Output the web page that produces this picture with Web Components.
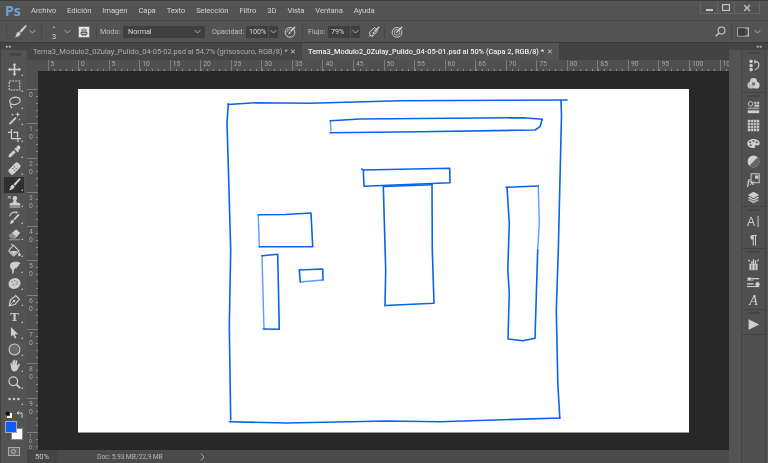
<!DOCTYPE html>
<html lang="es">
<head>
<meta charset="utf-8">
<title>Photoshop</title>
<style>
  html, body { margin: 0; height: 100%; background: #535353; overflow: hidden; }
  body { font-family: Roboto, "Liberation Sans", sans-serif; }
</style>
</head>
<body>
<ps-app></ps-app>

<script>
// icons are all on a 16x16 box, light grey
const ICONS = {
  move: '<path d="M8 0l2.400 2.800H9V7h4.200V5.600L16 8l-2.800 2.400V9H9v4.200h1.400L8 16l-2.400-2.800H7V9H2.800v1.400L0 8l2.800-2.400V7H7V2.800H5.600z"/>',
  marquee: '<rect x="1.500" y="2.500" width="13" height="11" fill="none" stroke="currentColor" stroke-width="1.300" stroke-dasharray="2.400 1.300"/>',
  lasso: '<ellipse cx="8.500" cy="6" rx="6.500" ry="4.500" fill="none" stroke="currentColor" stroke-width="1.500" transform="rotate(-12 8.500 6)"/><path d="M4 10c-1.600 1-1.600 2.600 0 3 .9.300.6 1.600-.6 2" fill="none" stroke="currentColor" stroke-width="1.300"/>',
  wand: '<path d="M1 14l8-8 1.600 1.600-8 8z"/><path d="M12 0l.8 2.200L15 3l-2.200.8L12 6l-.8-2.200L9 3l2.200-.8zM5.500 1.500l.5 1.300 1.300.5-1.300.5-.5 1.300L5 3.800l-1.300-.5 1.300-.5zM14 8l.4 1.100 1.100.4-1.100.4L14 11l-.4-1.100-1.100-.4 1.100-.4z"/>',
  crop: '<path d="M3.500 0H5v11h11v1.500h-3V16h-1.500v-3.500h-8V5H0V3.500h3.500zM6.500 3.500h6v7H11V5H6.500z"/>',
  eyedropper: '<path d="M11 1.200c1-1 2.600-1 3.600.1 1 1 1 2.500 0 3.500l-2 2 .9 1-1.300 1.300-4.300-4.300 1.300-1.300 1 .9zM7 6.500L9.500 9l-5.600 5.600-2.500.9-.9-.9.900-2.500z"/>',
  heal: '<g transform="rotate(-45 8 8)"><rect x="0" y="4" width="16" height="8" rx="2.200"/><g fill="#535353"><circle cx="6.500" cy="6.500" r=".7"/><circle cx="9.500" cy="6.500" r=".7"/><circle cx="6.500" cy="9.500" r=".7"/><circle cx="9.500" cy="9.500" r=".7"/></g></g>',
  brush: '<path d="M15 .5c.6.500.5 1.300-.1 2L8.800 9.500 6.700 7.600 13.300.8c.6-.5 1.200-.7 1.700-.3zM6 8.400l2.100 1.900c-.3 2.700-2.900 4.800-7.100 4.700 1.400-1 1.600-1.900 1.800-3.300.2-1.600 1.500-3 3.200-3.300z"/>',
  stamp: '<path d="M8.500 1a2.800 2.800 0 0 1 1.600 5.100L10.500 9l4.500 1.500V13H2v-2.500L6.500 9l.4-2.900A2.800 2.800 0 0 1 8.500 1zM2 14h13v1.500H2z"/><path d="M0 1l3.500 3.500M3.500 1L0 4.500" stroke="currentColor" stroke-width="1.200" fill="none"/>',
  history: '<path d="M13.500 4c.6.400.5 1.200 0 1.800L8.200 11.500 6.500 10l5.400-5.700c.5-.5 1.100-.7 1.600-.3zM5.800 10.700l1.800 1.600c-.3 2-2.500 3.700-6 3.500 1.200-.8 1.400-1.600 1.500-2.700.2-1.300 1.300-2.200 2.700-2.400z"/><path d="M2 6.500C3 3 6 1 10.500 1.500" fill="none" stroke="currentColor" stroke-width="1.300"/><path d="M9.500 0l3 1.700-3 1.700z"/>',
  eraser: '<path d="M10 1.500l5 4.500-6 6.500H4.500L1 9.500z"/><path d="M1 14h14v1H1z" opacity=".7"/><path d="M5 6l4.600 4.200L8 12.500H4.500L1 9.500z" fill="#8a8a8a"/>',
  bucket: '<path d="M6.500 1.500l7 7-5.500 5.500c-.6.600-1.400.6-2 0L1.500 9.500c-.6-.6-.6-1.400 0-2z" fill="none" stroke="currentColor" stroke-width="1.400"/><path d="M2.500 8.500h9L8 13c-.6.600-1 .600-1.600 0z"/><path d="M14 10c1 1.500 1.700 2.500 1.700 3.500a1.700 1.700 0 0 1-3.400 0c0-1 .7-2 1.700-3.500z"/><path d="M6.500 1.500L3.500 0" stroke="currentColor" stroke-width="1.200"/>',
  smudge: '<path d="M3 3.500C4.500 1.500 7 1 9.500 1c2.500 0 5 .4 5.500 1.500.4 1-.8 1.600-2.500 1.800 1.200.3 1.500 1 1 1.600-.5.7-1.500.8-2.500.8.600.5.500 1.300-.2 1.800-.6.400-1.300.4-2 .2L7.500 11l-.8 4-1.700.4.200-4.500C3.500 10 1.500 6.500 3 3.500z"/>',
  sponge: '<ellipse cx="8" cy="8" rx="7.500" ry="6.500" transform="rotate(-18 8 8)"/><g fill="#6a6a6a"><circle cx="5" cy="6" r=".9"/><circle cx="8.500" cy="4.500" r=".8"/><circle cx="11.500" cy="6" r=".9"/><circle cx="6.500" cy="9.500" r=".9"/><circle cx="10" cy="8.500" r=".9"/><circle cx="4" cy="10" r=".6"/><circle cx="12.500" cy="9" r=".6"/></g>',
  pen: '<path d="M1.500 14.500l1.500-7L9.500 2 14 6.500 8.500 13z" fill="none" stroke="currentColor" stroke-width="1.500"/><circle cx="7.500" cy="8.500" r="1.500"/><path d="M1.500 14.500L6.500 9.500" stroke="currentColor"/>',
  type: '<text x="8" y="13.500" text-anchor="middle" font-family="Liberation Serif" font-weight="700" font-size="16">T</text>',
  path: '<path d="M3 .5l9.500 9.500H8.300l2 4.600-1.900.9-2-4.700L3 13.500z"/><path d="M3 .5v13" stroke="#2b2b2b" stroke-width=".8" fill="none"/>',
  ellipse: '<circle cx="8" cy="8" r="6.700" fill="#6a6a6a" stroke="currentColor" stroke-width="1.300"/>',
  hand: '<path d="M3.800 4.500c.5 0 .9.400 1 1L5.500 8V2.500c0-.5.400-.9.900-.9s.9.400.9.900L7.500 7V1.500c0-.5.400-.9.900-.9s.9.400.9.900V7l.6-4.800c.1-.5.500-.8 1-.7.400.1.700.5.600 1L11 8l.3.400 1.700-2.100c.4-.4 1-.5 1.400-.1.400.3.400.9.100 1.300L11.800 13c-.8 1.500-2 2.300-3.800 2.300-2.300 0-3.500-1.200-4-3.200L2.900 5.600c-.1-.6.300-1.100.9-1.100z"/>',
  zoom: '<circle cx="6.500" cy="6.500" r="5.300" fill="none" stroke="currentColor" stroke-width="1.500"/><path d="M10.500 10.500l4.500 4.500" stroke="currentColor" stroke-width="2.200"/>',
  dots: '<circle cx="3" cy="8" r="1.400"/><circle cx="8" cy="8" r="1.400"/><circle cx="13" cy="8" r="1.400"/>',
  search: '<circle cx="9.500" cy="6.500" r="5" fill="none" stroke="currentColor" stroke-width="1.500"/><path d="M6 10l-5 5" stroke="currentColor" stroke-width="2"/>',
  workspace: '<rect x=".8" y="2.800" width="14.400" height="10.400" fill="none" stroke="currentColor" stroke-width="1.300"/><rect x="1" y="3" width="10" height="10" fill="#3e3e3e"/>',
  preset: '<rect x="1" y="1" width="14" height="14" fill="#e6e6e6"/><path d="M8 3v5M5.500 4v4.500M10.500 4v4.500M4 8.500h8v2.500H4zM6 11v2M8 11v2M10 11v2" stroke="#444" stroke-width="1.200" fill="none"/>',
  pressure: '<circle cx="8" cy="8.500" r="6.500" fill="none" stroke="currentColor" stroke-width="1.300"/><path d="M4 8.500a4 4 0 0 1 4-4" fill="none" stroke="currentColor"/><path d="M15 1c.4.300.3.800 0 1.200L9.500 8 8 6.700 13.700 1c.4-.3.900-.3 1.300 0zM7.500 7.400l1.300 1.200c-.2 1.400-1.400 2.400-3.300 2.300.6-.5.700-1 .8-1.700.1-.9.500-1.500 1.200-1.800z"/>',
  airbrush: '<path d="M2 8l7-6 4 4-6 7H3z" fill="none" stroke="currentColor" stroke-width="1.300"/><path d="M15 1c.4.300.3.800 0 1.200L9.500 8 8 6.700 13.700 1c.4-.3.900-.3 1.300 0zM7.500 7.400l1.300 1.200c-.2 1.400-1.400 2.400-3.300 2.300.6-.5.700-1 .8-1.700.1-.9.500-1.500 1.200-1.800z"/><path d="M1 14l3-2M5 15l2-2" stroke="currentColor"/>',
  symmetry: '<circle cx="8" cy="8.500" r="6.500" fill="none" stroke="currentColor" stroke-width="1.200"/><circle cx="8" cy="8.500" r="3.800" fill="none" stroke="currentColor" stroke-width="1"/><path d="M15 1L7 9" stroke="currentColor" stroke-width="1.600"/>',
  histpanel: '<rect x="3" y="1" width="4" height="4" rx="1.500"/><rect x="3" y="6" width="4" height="4" rx="1.500"/><rect x="3" y="11" width="4" height="4" rx="1.500"/><path d="M9.500 4C13 2 15 5 14.500 8c-.3 2.500-2 4.500-5 5" fill="none" stroke="currentColor" stroke-width="1.400"/><path d="M9 1v5l3-3z"/>',
  color: '<circle cx="8" cy="5.500" r="4.300"/><circle cx="4.800" cy="10" r="4.300" opacity=".85"/><circle cx="11.200" cy="10" r="4.300"/><circle cx="8" cy="8.500" r="2.200" fill="#777"/>',
  libs: '<circle cx="4.500" cy="3.500" r="2.800" fill="none" stroke="currentColor" stroke-width="1.100"/><rect x="9" y="1" width="2.500" height="2.500"/><rect x="12.500" y="1" width="2.500" height="2.500"/><rect x="9" y="4.500" width="6" height="2.500"/><rect x="1" y="8" width="14" height="2" opacity=".6"/><rect x="1" y="11.500" width="14" height="3.500"/>',
  swatches: '<rect x="1" y="1" width="14" height="14"/><path d="M4.500 1v14M8 1v14M11.500 1v14M1 4.500h14M1 8h14M1 11.500h14" stroke="#535353" stroke-width=".9"/>',
  palette: '<path d="M8 2.500c4.200 0 7.700 2.300 7.700 5.200 0 2.500-2.200 2.800-4 2.600-1.500-.2-2 .5-1.700 1.600.2.800-.6 1.600-2.500 1.600C3.500 13.500.3 11.200.3 8 .3 5 3.800 2.500 8 2.500z"/><g fill="#535353"><circle cx="4" cy="6.500" r="1.200"/><circle cx="8" cy="5" r="1.200"/><circle cx="12" cy="6.500" r="1.200"/><circle cx="4.500" cy="10" r="1.200"/></g>',
  adjust: '<circle cx="8" cy="8" r="7.300"/><path d="M13.200 2.800A7.300 7.300 0 0 1 2.800 13.200z" fill="#666"/>',
  styles: '<rect x="5" y="1" width="10" height="11" fill="none" stroke="currentColor" stroke-width="1.200"/><rect x="10" y="3" width="4" height="4"/><text x="0" y="15" font-family="Liberation Serif" font-style="italic" font-weight="700" font-size="11">fx</text>',
  layers: '<path d="M8 1l7 4-7 4-7-4z"/><path d="M1 8l2-1 5 3 5-3 2 1-7 4z"/><path d="M1 11l2-1 5 3 5-3 2 1-7 4z" opacity=".85"/>',
  chartext: '<text x="0" y="14" font-family="Liberation Sans" font-size="15">A</text><rect x="13" y="1" width="1.200" height="14"/>',
  para: '<text x="8" y="14" text-anchor="middle" font-family="Liberation Sans" font-weight="700" font-size="16">¶</text>',
  brushes: '<path d="M3 7h10v8H3z"/><path d="M6 7V4M8 7V1.500M10.500 7V3" stroke="currentColor" stroke-width="1.600"/><path d="M1.500 2.500l2 1.500M14.500 2l-2 2" stroke="currentColor" stroke-width="1.400"/><path d="M6 8v7M10 8v7" stroke="#535353"/>',
  clone: '<path d="M0 3h10M0 5h8" stroke="currentColor"/><path d="M6 2.500h9v1.500H6zM0 9h8v1.500H0z"/><circle cx="3" cy="3.500" r="2"/><circle cx="13" cy="10" r="2.600"/><path d="M0 13h15" stroke="currentColor" stroke-width="1.300"/>',
  glyphs: '<text x="8" y="14" text-anchor="middle" font-family="Liberation Serif" font-style="italic" font-size="17">A</text>',
  play: '<path d="M2 1.500L15 8 2 14.500z"/>'
};

const CHEVRON = '<svg width="7" height="5" viewBox="0 0 7 5" fill="none" stroke="#a9a9a9" stroke-width="1"><path d="M.5 1l3 3 3-3"/></svg>';

class PsIcon extends HTMLElement {
  connectedCallback() {
    const size = this.getAttribute('size') || 14;
    const shadow = this.attachShadow({ mode: 'open' });
    shadow.innerHTML = `
    <style>
      :host { display: inline-flex; color: var(--icon-color, #cfcfcf); }
      svg { display: block; overflow: visible; }
    </style>
    <svg width="${size}" height="${size}" viewBox="0 0 16 16" fill="currentColor">${ICONS[this.getAttribute('name')] || ''}</svg>`;
  }
}
customElements.define('ps-icon', PsIcon);

class PsMenubar extends HTMLElement {
  constructor() {
    super();
    const items = ['Archivo', 'Edición', 'Imagen', 'Capa', 'Texto', 'Selección', 'Filtro', '3D', 'Vista', 'Ventana', 'Ayuda'];
    this.attachShadow({ mode: 'open' }).innerHTML = `
    <style>
      :host { display: flex; align-items: center; height: 20px; padding-left: 5px; font-size: 7.700px; letter-spacing: -.1px; color: #d2d2d2; box-sizing: border-box; border-top: 1px solid #3c3c3c; }
      .logo { font: 700 14px "Open Sans", sans-serif; letter-spacing: 0; color: #6ea3d8; width: 26px; margin-top: -1px; }
      .menu { display: flex; gap: 11px; }
      .win { margin-left: auto; margin-right: 8px; margin-top: -5px; width: 60px; height: 12px; display: flex; border: 1px solid #646464; border-top: 0; box-sizing: border-box; }
      .win span { display: flex; align-items: center; justify-content: center; flex: 1; border-right: 1px solid #646464; }
      .win span:last-child { border: 0; flex: 1.500; }
    </style>
    <span class="logo">Ps</span>
    <div class="menu">${items.map((m) => `<span>${m}</span>`).join('')}</div>
    <div class="win">
      <span><svg width="7" height="7"><rect y="5" width="7" height="2" fill="#c4c4c4"/></svg></span>
      <span><svg width="8" height="7"><rect x=".5" y=".5" width="7" height="6" fill="none" stroke="#c4c4c4" stroke-width="1.300"/></svg></span>
      <span><svg width="8" height="8" stroke="#c4c4c4" stroke-width="1.300"><path d="M1 1l6 6M7 1L1 7"/></svg></span>
    </div>`;
  }
}
customElements.define('ps-menubar', PsMenubar);

class PsOptions extends HTMLElement {
  constructor() {
    super();
    const field = (val, w) => `<span class="field" style="width:${w}px">${val}</span><span class="arrow">${CHEVRON}</span>`;
    this.attachShadow({ mode: 'open' }).innerHTML = `
    <style>
      :host { display: flex; align-items: center; height: 23px; box-sizing: border-box; font-size: 7.200px; color: #bdbdbd; border-top: 1px solid #474747; border-bottom: 1px solid #3a3a3a; padding-left: 6px; }
      .grip { width: 1px; height: 13px; background: #474747; margin-right: 7px; }
      .sep { width: 1px; height: 15px; background: #474747; flex: none; }
      .chev { display: inline-flex; }
      .size { display: flex; flex-direction: column; align-items: center; line-height: 9px; font-size: 7.500px; color: #d0d0d0; width: 10px; margin-top: 1px; }
      .field { display: inline-flex; align-items: center; height: 12px; background: #3f3f3f; color: #d6d6d6; padding-left: 3px; box-sizing: border-box; }
      .arrow { display: inline-flex; align-items: center; justify-content: center; width: 9px; height: 12px; background: #3f3f3f; margin-left: 1px; }
      .select { display: flex; justify-content: space-between; align-items: center; width: 82px; height: 12px; padding: 0 4px 0 5px; box-sizing: border-box; background: #3f3f3f; color: #d6d6d6; }
      .end { margin-left: auto; display: flex; align-items: center; margin-right: 7px; }
    </style>
    <span class="grip"></span>
    <ps-icon name="brush" size="13" style="margin-right:1.500px"></ps-icon>
    <span class="chev" style="margin-right:5.500px">${CHEVRON}</span>
    <span class="sep" style="margin-right:7px"></span>
    <span class="size"><span>•</span><span>3</span></span>
    <span class="chev" style="margin-left:4.500px;margin-right:7.500px">${CHEVRON}</span>
    <ps-icon name="preset" size="12" style="margin-right:6px"></ps-icon>
    <span class="sep" style="margin-right:3px"></span>
    <span style="width:23px">Modo:</span>
    <span class="select">Normal ${CHEVRON}</span>
    <span style="margin-left:7px;width:34px">Opacidad:</span>
    ${field('100%', 22)}
    <ps-icon name="pressure" size="12" style="margin-left:6px;margin-right:6px"></ps-icon>
    <span class="sep" style="margin-right:5px"></span>
    <span style="width:20px">Flujo:</span>
    ${field('79%', 22)}
    <ps-icon name="airbrush" size="12" style="margin-left:8px;margin-right:4px"></ps-icon>
    <span class="sep" style="margin-right:6px"></span>
    <ps-icon name="symmetry" size="12"></ps-icon>
    <div class="end">
      <ps-icon name="search" size="11" style="margin-right:5px"></ps-icon>
      <span class="sep" style="margin-right:5px"></span>
      <ps-icon name="workspace" size="12" style="margin-right:5px"></ps-icon>
      ${CHEVRON}
    </div>`;
  }
}
customElements.define('ps-options', PsOptions);

class PsToolbar extends HTMLElement {
  constructor() {
    super();
    const tools = ['move', 'marquee', 'lasso', 'wand', 'crop', 'eyedropper', 'heal', 'brush', 'stamp', 'history', 'eraser', 'bucket', 'smudge', 'sponge', 'pen', 'type', 'path', 'ellipse', 'hand', 'zoom', 'dots'];
    this.attachShadow({ mode: 'open' }).innerHTML = `
    <style>
      :host { display: block; width: 27px; box-sizing: border-box; padding-left: 2px; border-left: 1px solid #3f3f3f; }
      .head { height: 7px; background: #454545; margin: 0 0 0 -2px; font: 5px "Open Sans", sans-serif; line-height: 7px; color: #bbb; padding-left: 5px; }
      .grip { height: 3px; margin: 3px 6px 0; background: #464646; margin-bottom: 5.250px; }
      .tool { display: flex; align-items: center; justify-content: center; position: relative; height: 16.470px; margin: 0 3px 0 1px; }
      .tool.on { background: #2f2f2f; }
      .tool::after { content: ""; position: absolute; right: 1px; bottom: 2px; border: 1px solid transparent; border-right-color: #bbb; border-bottom-color: #bbb; }
      .small { display: flex; justify-content: space-between; align-items: center; height: 13px; margin: 1px 3px 0 2px; }
      .swatch { position: relative; height: 20px; }
      .fg, .bg { position: absolute; width: 12px; height: 12px; box-sizing: border-box; }
      .bg { left: 7.500px; top: 7px; background: #fff; border: 1px solid #888; }
      .fg { left: 1.500px; top: 0; background: #0b5cff; border: 1px solid #aaa; }
      .mask { width: 12px; height: 9px; margin: 6px 0 0 4.500px; border: 1px solid #aaa; box-sizing: border-box; display: flex; align-items: center; justify-content: center; background: #666; }
      .mask i { width: 5px; height: 5px; border-radius: 50%; border: 1px solid #bbb; box-sizing: border-box; }
    </style>
    <div class="head">▸▸</div>
    <div class="grip"></div>
    ${tools.map((t) => `<div class="tool ${t === 'brush' ? 'on' : ''}"><ps-icon name="${t}" size="${t === 'dots' ? 14 : 13}"></ps-icon></div>`).join('')}
    <div class="small">
      <svg width="7" height="7"><rect x="2" y="2" width="5" height="5" fill="#fff"/><rect width="5" height="5" fill="#111" stroke="#ccc" stroke-width=".5"/></svg>
      <svg width="8" height="8" fill="none" stroke="#d0d0d0"><path d="M1 2h5v5M1 2l2-1.500M1 2l2 1.500"/></svg>
    </div>
    <div class="swatch"><span class="bg"></span><span class="fg"></span></div>
    <div class="mask"><i></i></div>`;
  }
}
customElements.define('ps-toolbar', PsToolbar);

class PsTabs extends HTMLElement {
  constructor() {
    super();
    this.attachShadow({ mode: 'open' }).innerHTML = `
    <style>
      :host { display: flex; height: 17px; background: #424242; font-size: 7.500px; color: #aeaeae; }
      .tab { display: flex; align-items: center; justify-content: space-between; box-sizing: border-box; padding: 0 6px; white-space: nowrap; }
      .tab.first { width: 275px; background: #464646; }
      .tab.on { width: 257px; background: #535353; color: #efefef; font-weight: 500; font-size: 7.400px; }
      .x { font-size: 7px; font-weight: 400; color: #c4c4c4; }
    </style>
    <div class="tab first"><span>Tema3_Modulo2_0Zulay_Pulido_04-05-02.psd al 54,7% (grisoscuro, RGB/8) *</span><span class="x">✕</span></div>
    <div class="tab on"><span>Tema3_Modulo2_0Zulay_Pulido_04-05-01.psd al 50% (Capa 2, RGB/8) *</span><span class="x">✕</span></div>`;
  }
}
customElements.define('ps-tabs', PsTabs);

class PsRulerTop extends HTMLElement {
  constructor() {
    super();
    const labels = [5, 0];
    for (let i = 5; i <= 100; i += 5) labels.push(i);
    labels.push(10);
    this.attachShadow({ mode: 'open' }).innerHTML = `
    <style>
      :host { display: flex; height: 11px; padding-left: 20.500px; overflow: hidden; font-size: 6.800px; color: #a6a6a6; background: #505050 repeating-linear-gradient(90deg, #8a8a8a 0 1px, transparent 1px 6.110px) 20.500px 9px / 100% 2px no-repeat; }
      .mark { flex: 0 0 30.550px; box-sizing: border-box; border-left: 1px solid #7c7c7c; padding-left: 2px; line-height: 9px; }
    </style>
    ${labels.map((l) => `<span class="mark">${l}</span>`).join('')}`;
  }
}
customElements.define('ps-ruler-top', PsRulerTop);

class PsRulerLeft extends HTMLElement {
  constructor() {
    super();
    let marks = '';
    for (let i = 0; i <= 100; i += 10) {
      // the last one has to fit above the status bar
      const tight = i === 100 ? ' style="font-size:5px;line-height:5.400px"' : '';
      marks += `<span class="mark"${tight}>${String(i).split('').join('<br>')}</span>`;
    }
    this.attachShadow({ mode: 'open' }).innerHTML = `
    <style>
      :host { display: block; width: 11px; flex: none; padding-top: 18px; box-sizing: border-box; overflow: hidden; font-size: 6.800px; line-height: 8px; color: #a6a6a6; background: #505050 repeating-linear-gradient(180deg, #8a8a8a 0 1px, transparent 1px 6.860px) 9px 18px / 2px 100% no-repeat; }
      .mark { display: block; height: 34.300px; box-sizing: border-box; border-top: 1px solid #7c7c7c; padding: 1px 0 0 2px; }
    </style>
    ${marks}`;
  }
}
customElements.define('ps-ruler-left', PsRulerLeft);

class PsSketch extends HTMLElement {
  constructor() {
    super();
    // the hand drawn wireframe, in window coordinates
    const lines = [
      'M228.300 104.500L255 102.800 310 103.300 400 100.800 567 100',
      'M561 100.500L561.500 115 559.500 200 558.300 250 556.300 310 557.800 383 559.800 418',
      'M228.300 103.500L227 123 229 190 230.700 250 229.300 326 230.700 420',
      'M229.300 421.700L286.700 423 386.700 421 440 421.700 560 418',
      'M330.300 120.700L360 119 523.300 117.700 542.300 119.300 540 126.700 535 130 420 131.700 330 132.700',
      'M361.700 169L363.300 170 449.700 168.300 450 182.700 364 186.300 363.300 170',
      'M383.300 185.700L385.700 270 385 306M385 305.500L434 303.300 432.300 250 432 184.300',
      'M384 186.500L432 184.800',
      'M506 187.300L538.300 186',
      'M507 187.500L509.300 223 507.800 270 509.300 293 508 339 523 340.700 535 338.300 537.700 250',
      'M258.300 214.700L285 214.500 311 213 312.700 246.700 259.300 246.700',
      'M262 255.700L277.700 254.300 279.300 329.300 263.300 329',
      'M299.300 270L322.700 269 323 280',
      'M299.300 270L300.300 282'
    ];
    const pale = [
      'M538.300 186L539.300 223 537.700 250',
      'M330.300 120.700L331 131',
      'M258.300 214.700L259.300 246.700',
      'M262 255.700L264 329',
      'M300.300 282L323 280'
    ];
    this.attachShadow({ mode: 'open' }).innerHTML = `
    <style>
      :host { display: block; width: 611px; height: 343px; background: #fff; box-shadow: 0 1px 0 #9a9a9a; }
      svg { display: block; }
      path { fill: none; stroke-linejoin: round; stroke-linecap: round; }
    </style>
    <svg width="611" height="343" viewBox="78 89 611 343">
      ${pale.map((d) => `<path d="${d}" stroke="#5f9bf6" stroke-width="1.400"/>`).join('')}
      ${lines.map((d) => `<path d="${d}" stroke="#0a62ee" stroke-width="1.600"/>`).join('')}
    </svg>`;
  }
}
customElements.define('ps-sketch', PsSketch);

class PsStatus extends HTMLElement {
  constructor() {
    super();
    this.attachShadow({ mode: 'open' }).innerHTML = `
    <style>
      :host { display: flex; align-items: center; height: 13px; background: #4a4a4a; font-size: 6.800px; color: #b4b4b4; }
      .zoom { width: 31px; height: 100%; display: flex; align-items: center; padding-left: 8px; box-sizing: border-box; background: #454545; color: #c8c8c8; font-size: 7.600px; }
      .doc { margin-left: 39px; width: 103px; word-spacing: -.5px; }
    </style>
    <span class="zoom">50%</span>
    <span class="doc">Doc: 5,93 MB/22,9 MB</span>
    <svg width="5" height="8" fill="none" stroke="#aaa"><path d="M1 .5l3 3.500-3 3.500"/></svg>`;
  }
}
customElements.define('ps-status', PsStatus);

class PsDock extends HTMLElement {
  constructor() {
    super();
    const groups = [
      { pad: 6, h: 18, items: ['histpanel', 'color'] },
      { pad: 5, h: 18, items: ['libs', 'swatches', 'palette', 'adjust', 'styles', 'layers'] },
      { pad: 6, h: 17.500, items: ['chartext', 'para'] },
      { pad: 6, h: 18, items: ['brushes', 'clone', 'glyphs'] },
      { pad: 5, h: 19, items: ['play'] }
    ];
    this.attachShadow({ mode: 'open' }).innerHTML = `
    <style>
      :host { display: flex; flex-direction: column; width: 39px; box-sizing: border-box; padding-left: 12px; padding-right: 2px; }
      .head { height: 7px; margin: 0 -2px 0 -12px; background: #454545; font: 5px "Open Sans", sans-serif; line-height: 7px; color: #bbb; text-align: right; padding-right: 6px; }
      .group { position: relative; box-sizing: border-box; border: 1px solid #434343; border-top: 0; border-left-color: #464646; background: #505050; }
      .group::before { content: ""; position: absolute; left: 5px; right: 5px; top: 2px; height: 2px; background: #464646; }
      .row { display: flex; align-items: center; justify-content: center; }
      .rest { flex: 1; border: 1px solid #434343; border-top: 0; border-bottom: 0; background: #505050; }
    </style>
    <div class="head">◂◂</div>
    ${groups.map((g) => `<div class="group" style="padding-top:${g.pad}px">${g.items.map((i) => `<div class="row" style="height:${g.h}px"><ps-icon name="${i}" size="13"></ps-icon></div>`).join('')}</div>`).join('')}
    <div class="rest"></div>`;
  }
}
customElements.define('ps-dock', PsDock);

class PsApp extends HTMLElement {
  constructor() {
    super();
    this.attachShadow({ mode: 'open' }).innerHTML = `
    <style>
      :host { display: flex; flex-direction: column; width: 768px; height: 463px; background: #535353; overflow: hidden; filter: blur(.3px); }
      .main { flex: 1; display: flex; min-height: 0; }
      .work { flex: 1; min-width: 0; display: flex; flex-direction: column; }
      .rulers { flex: 1; min-height: 0; display: flex; }
      .canvas { flex: 1; background: #282828; padding: 18px 0 0 40px; }
    </style>
    <ps-menubar></ps-menubar>
    <ps-options></ps-options>
    <div class="main">
      <ps-toolbar></ps-toolbar>
      <div class="work">
        <ps-tabs></ps-tabs>
        <ps-ruler-top></ps-ruler-top>
        <div class="rulers">
          <ps-ruler-left></ps-ruler-left>
          <div class="canvas"><ps-sketch></ps-sketch></div>
        </div>
        <ps-status></ps-status>
      </div>
      <ps-dock></ps-dock>
    </div>`;
  }
}
customElements.define('ps-app', PsApp);
</script>
</body>
</html>
